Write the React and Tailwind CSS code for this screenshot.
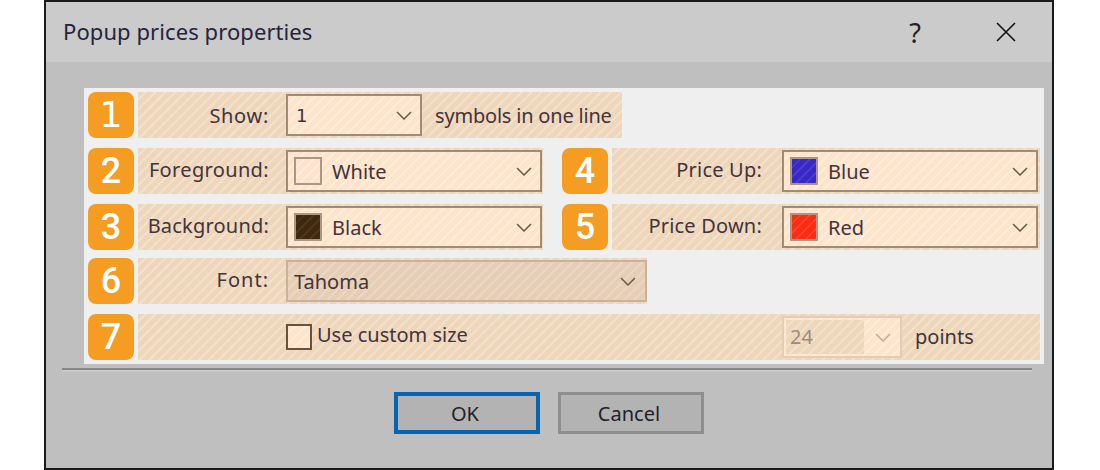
import React from "react";

const hatch = "bg-[repeating-linear-gradient(135deg,#eed6bb_0px,#eed6bb_4px,#f3e1ce_5px,#f3e1ce_6px,#eed6bb_7px)]";
const comboFill = "bg-[repeating-linear-gradient(135deg,#fde4cb_0px,#fde4cb_4px,#feeddc_5px,#feeddc_6px,#fde4cb_7px)]";

const Chevron = ({ color = "#6e5744" }) => (
  <svg width="16" height="9" viewBox="0 0 16 9" className="shrink-0 block">
    <path d="M1 1l7 7 7-7" fill="none" stroke={color} strokeWidth="1.5" />
  </svg>
);

const Badge = ({ n }) => (
  <div className={`w-[46px] h-[46px] shrink-0 rounded-lg bg-[#f59d23] text-white text-[36px] leading-none flex items-center justify-center ${n === "1" ? "font-['DejaVu_Sans',sans-serif]" : "font-['Roboto',sans-serif] font-medium"}`}>
    {n}
  </div>
);

const Combo = ({ className = "w-[256px]", swatch, label, labelClass = "" }) => (
  <div className={`${className} h-[42px] shrink-0 flex items-center border-2 border-[#a08b76] ${comboFill}`}>
    {swatch && <div className={`w-[28px] h-[28px] ml-[6px] mr-[10px] border-2 border-[#ab9884] ${swatch}`} />}
    <span className={`flex-1 ${swatch ? "" : "pl-[8px]"} text-[#43333a] relative top-[1px] ${labelClass}`}>{label}</span>
    <span className="pr-[8px]"><Chevron /></span>
  </div>
);

export default function App() {
  return (
    <div className="w-[1100px] h-[470px] bg-white font-['Noto_Sans',sans-serif] text-[20px] leading-none">
      <div className="ml-[44px] w-[1010px] h-[470px] border-2 border-[#1a1a1a] bg-[#bfbfbf] flex flex-col">
        <div className="h-[60px] shrink-0 bg-[#cbcbcb] flex items-center pl-[17px] text-[#24243a] text-[22px]">
          <span className="flex-1 relative top-[-1px] tracking-[0.08px]">Popup prices properties</span>
          <span className="mr-[75px] text-[27px] text-[#222]">?</span>
          <svg width="20" height="20" viewBox="0 0 20 20" className="mr-[36px]">
            <path d="M1 1l18 18M19 1L1 19" stroke="#111" strokeWidth="1.6" fill="none" />
          </svg>
        </div>

        <div className="mt-[26px] ml-[38px] w-[960px] h-[276px] bg-[#efefef] p-[4px] text-[#43333a]">
          <div className="flex gap-[4px] h-[46px]">
            <Badge n="1" />
            <div className={`w-[484px] flex items-center ${hatch}`}>
              <span className="w-[131px] text-right relative top-[1px] tracking-[0.7px]">Show:</span>
              <Combo className="w-[136px] ml-[17px]" label="1" labelClass="font-['DejaVu_Sans',sans-serif] text-[18px]" />
              <span className="ml-[13px] relative top-[1px] tracking-[-0.2px]">symbols in one line</span>
            </div>
          </div>

          <div className="flex gap-[4px] h-[46px] mt-[10px]">
            <Badge n="2" />
            <div className={`w-[405px] flex items-center ${hatch}`}>
              <span className="w-[131px] text-right relative top-[-1px] tracking-[0.35px]">Foreground:</span>
              <Combo className="w-[256px] ml-[17px]" swatch="bg-[repeating-linear-gradient(135deg,#fde3cd_0px,#fde3cd_5px,#fdebdd_5px,#fdebdd_7px)]" label="White" />
            </div>
            <div className="w-[11px]" />
            <Badge n="4" />
            <div className={`w-[428px] flex items-center ${hatch}`}>
              <span className="w-[150px] text-right relative top-[-1px] tracking-[0.2px]">Price Up:</span>
              <Combo className="w-[256px] ml-[20px]" swatch="bg-[repeating-linear-gradient(135deg,#3a28c6_0px,#3a28c6_5px,#4a3ad0_5px,#4a3ad0_7px)]" label="Blue" />
            </div>
          </div>

          <div className="flex gap-[4px] h-[46px] mt-[10px]">
            <Badge n="3" />
            <div className={`w-[405px] flex items-center ${hatch}`}>
              <span className="w-[131px] text-right relative top-[-1px] tracking-[0.2px]">Background:</span>
              <Combo className="w-[256px] ml-[17px]" swatch="bg-[repeating-linear-gradient(135deg,#40280f_0px,#40280f_5px,#4c3520_5px,#4c3520_7px)]" label="Black" />
            </div>
            <div className="w-[11px]" />
            <Badge n="5" />
            <div className={`w-[428px] flex items-center ${hatch}`}>
              <span className="w-[150px] text-right relative top-[-1px] tracking-[0.2px]">Price Down:</span>
              <Combo className="w-[256px] ml-[20px]" swatch="bg-[repeating-linear-gradient(135deg,#ff2a14_0px,#ff2a14_5px,#ff4526_5px,#ff4526_7px)]" label="Red" />
            </div>
          </div>

          <div className="flex gap-[4px] h-[46px] mt-[8px]">
            <Badge n="6" />
            <div className={`w-[509px] flex items-center ${hatch}`}>
              <span className="w-[131px] text-right relative top-[-1px] tracking-[1px]">Font:</span>
              <div className="w-[361px] h-[42px] ml-[17px] shrink-0 flex items-center border-2 border-[#c9b29b] bg-[repeating-linear-gradient(135deg,#e6ceb6_0px,#e6ceb6_4px,#ead7c4_5px,#ead7c4_6px,#e6ceb6_7px)]">
                <span className="flex-1 pl-[6px] relative top-[1px]">Tahoma</span>
                <span className="pr-[9px]"><Chevron /></span>
              </div>
            </div>
          </div>

          <div className="flex gap-[4px] h-[46px] mt-[10px]">
            <Badge n="7" />
            <div className={`w-[902px] flex items-center ${hatch}`}>
              <div className={`w-[26px] h-[26px] ml-[148px] mr-[5px] border-2 border-[#6b513a] ${comboFill}`} />
              <span className="w-[465px] relative top-[-2px]">Use custom size</span>
              <div className={`w-[120px] h-[42px] flex items-center border-2 border-[#e3cdb6] ${comboFill}`}>
                <div className={`w-[78px] h-[34px] ml-[2px] flex items-center pl-[4px] text-[#9c8b7c] ${hatch}`}>24</div>
                <span className="ml-[11px]"><Chevron color="#c2ad99" /></span>
              </div>
              <span className="ml-[13px]">points</span>
            </div>
          </div>
        </div>

        <div className="mt-[4px] ml-[16px] w-[970px] h-[4px] border-t-2 border-[#878787] bg-[#c9c9c9]" />

        <div className="mt-[20px] flex justify-center gap-[18px] text-[#1f1f2a]">
          <div className="w-[146px] h-[42px] border-4 border-[#0565b0] bg-[#b3b3b3] flex items-center justify-center pr-[4px]"><span className="relative top-[1px]">OK</span></div>
          <div className="w-[146px] h-[42px] border-[3px] border-[#8e8e8e] bg-[#b3b3b3] flex items-center justify-center pr-[4px]"><span className="relative top-[1px]">Cancel</span></div>
        </div>
      </div>
    </div>
  );
}
